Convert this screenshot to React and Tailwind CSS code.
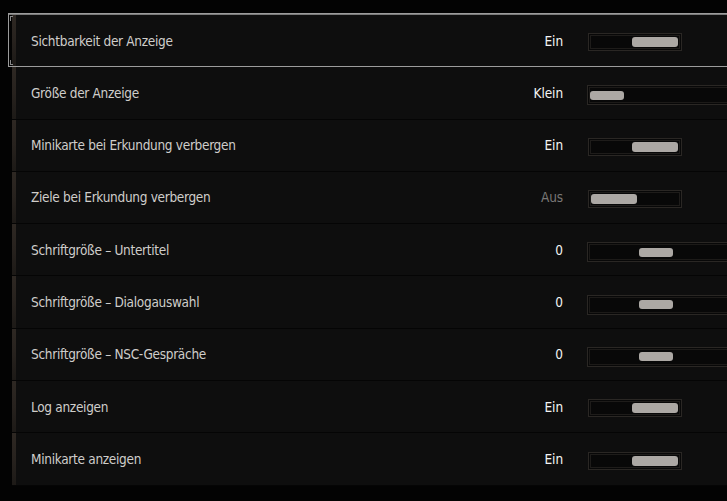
import React from 'react';

const rows = [
  { label: 'Sichtbarkeit der Anzeige', value: 'Ein', type: 'toggle', on: true, selected: true },
  { label: 'Größe der Anzeige', value: 'Klein', type: 'slider', start: true },
  { label: 'Minikarte bei Erkundung verbergen', value: 'Ein', type: 'toggle', on: true },
  { label: 'Ziele bei Erkundung verbergen', value: 'Aus', type: 'toggle', on: false },
  { label: 'Schriftgröße – Untertitel', value: '0', type: 'slider' },
  { label: 'Schriftgröße – Dialogauswahl', value: '0', type: 'slider' },
  { label: 'Schriftgröße – NSC-Gespräche', value: '0', type: 'slider' },
  { label: 'Log anzeigen', value: 'Ein', type: 'toggle', on: true },
  { label: 'Minikarte anzeigen', value: 'Ein', type: 'toggle', on: true },
];

const Toggle = ({ on }) => (
  <div className="ml-[1px] mt-[3px] h-[18px] w-[94px] border border-[#2a2724] bg-[#080808] p-[1px]">
    <div
      className={`flex h-full items-center border border-[#1e1c1a] ${on ? 'justify-end pr-[1px]' : 'justify-start'}`}
    >
      <div className="h-[10px] w-[46px] rounded-[3px] bg-[#aca8a4]" />
    </div>
  </div>
);

const Slider = ({ start }) => (
  <div className="mt-[5px] h-[20px] w-[150px] border border-[#2a2724] bg-[#080808] p-[1px]">
    <div className={`flex h-full items-center border border-[#1c1a18] ${start ? 'pl-0' : 'pl-[49px]'}`}>
      <div className="h-[9px] w-[34px] rounded-[3px] bg-[#aca8a4]" />
    </div>
  </div>
);

const Row = ({ row }) => (
  <div className="relative flex h-[52.3px] shrink-0 border-b border-[#050505] bg-[#0e0e0e]">
    <div className="w-[4px] shrink-0 bg-gradient-to-b from-[#2e2823] via-[#27221e] to-[#1d1a17]" />
    <div className="flex flex-1 items-center overflow-hidden pl-[15px]">
      <div className="flex-1 truncate text-[13.5px] tracking-[-0.3px] text-[#cfcdca]">{row.label}</div>
      <div
        className={`w-[80px] text-right text-[13.5px] tracking-[-0.1px] ${row.value === 'Aus' ? 'text-[#7a7876]' : 'text-[#f4f4f4]'}`}
      >
        {row.value}
      </div>
      <div className="ml-[24px] w-[140px] shrink-0 overflow-hidden">
        {row.type === 'toggle' ? <Toggle on={row.on} /> : <Slider start={row.start} />}
      </div>
    </div>
    {row.selected && (
      <div className="pointer-events-none absolute -bottom-[1px] -left-[4px] -right-[2px] -top-[2px] flex flex-col justify-between border border-[#9c9c9c]">
        <div>
          <div className="h-px bg-[#7a7a7a]" />
          <div className="ml-px mt-px h-[5px] w-[3px] border-l border-t border-[#8a8a8a]" />
        </div>
        <div className="mb-px ml-px h-[5px] w-[3px] border-b border-l border-[#8a8a8a]" />
      </div>
    )}
  </div>
);

export default function App() {
  return (
    <div
      className="h-[501px] w-[727px] overflow-hidden bg-[#030303] pl-[12px] pt-[15px]"
      style={{ fontFamily: '"Liberation Sans Narrow", "DejaVu Sans Condensed", "Roboto", sans-serif' }}
    >
      <div className="flex flex-col">
        {rows.map((row) => (
          <Row key={row.label} row={row} />
        ))}
      </div>
    </div>
  );
}
